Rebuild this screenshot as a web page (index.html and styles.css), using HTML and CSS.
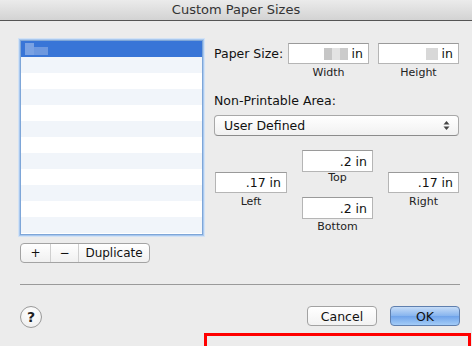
FILE: index.html
```html
<!DOCTYPE html>
<html>
<head>
<meta charset="utf-8">
<link rel="stylesheet" href="styles.css">
</head>
<body>
<div class="window">
  <div class="titlebar">Custom Paper Sizes</div>

  <div class="content">
    <div class="left">
      <div class="list">
        <div class="row selected"><span class="blur b1"></span><span class="blur b2"></span></div>
        <div class="row"></div><div class="row"></div><div class="row"></div>
        <div class="row"></div><div class="row"></div><div class="row"></div>
        <div class="row"></div><div class="row"></div><div class="row"></div>
        <div class="row"></div><div class="row"></div>
      </div>
      <div class="segmented">
        <span class="seg plus">+</span>
        <span class="seg minus">&minus;</span>
        <span class="seg dup">Duplicate</span>
      </div>
    </div>

    <div class="right">
      <div class="size-row">
        <span class="label">Paper Size:</span>
        <div class="field-group">
          <div class="field wide"><span class="blur g1"></span><span class="blur g2"></span><span class="blur g3"></span> in</div>
          <div class="caption">Width</div>
        </div>
        <div class="field-group">
          <div class="field wide"><span class="blur g4"></span> in</div>
          <div class="caption">Height</div>
        </div>
      </div>

      <div class="label np">Non-Printable Area:</div>
      <div class="popup">
        <span>User Defined</span>
        <svg class="arrows" width="7" height="11" viewBox="0 0 7 11">
          <path d="M3.5 1 L6.5 4.5 L0.5 4.5 Z" fill="#444"/>
          <path d="M3.5 10 L6.5 6.5 L0.5 6.5 Z" fill="#444"/>
        </svg>
      </div>

      <div class="margins">
        <div class="field m-top">.2 in</div>
        <div class="field m-left">.17 in</div>
        <div class="caption c-top">Top</div>
        <div class="field m-right">.17 in</div>
        <div class="caption c-left">Left</div>
        <div class="field m-bottom">.2 in</div>
        <div class="caption c-right">Right</div>
        <div class="caption c-bottom">Bottom</div>
      </div>
    </div>
  </div>

  <div class="separator"></div>

  <div class="footer">
    <div class="help">?</div>
    <div class="actions">
      <button class="btn">Cancel</button>
      <button class="btn default">OK</button>
    </div>
  </div>

  <div class="marker"></div>
</div>
</body>
</html>
```

FILE: styles.css
```css
* { margin: 0; padding: 0; box-sizing: border-box }

body {
  background: #ececec;
  font-family: "DejaVu Sans", "Liberation Sans", sans-serif;
  font-size: 12px;
  color: #111;
  overflow: hidden;
}

.window {
  position: relative;
  width: 472px;
  height: 346px;
}

.titlebar {
  height: 21px;
  line-height: 20px;
  text-align: center;
  font-size: 13px;
  color: #333;
  background: linear-gradient(#ebebeb, #d3d3d3);
  border-bottom: 1px solid #555;
}

.content {
  display: flex;
  padding: 19px 0 0 20px;
}

/* list + segmented buttons */
.left { width: 183px }

.list {
  height: 195px;
  border: 1px solid #7ea6d8;
  box-shadow: 0 0 0 1px #a9c8ee, 0 0 0 2px #d2e2f5;
  background: #fff;
}

.row { height: 16px; display: flex; align-items: center; padding-left: 4px }
.row:nth-child(even) { background: #f1f5fa }
.row.selected { background: #3875d7 }

.blur { display: inline-block }
.b1 { width: 9px; height: 12px; background: #7aa2e3 }
.b2 { width: 14px; height: 8px; background: #6d98df; margin-top: 4px }

.segmented {
  display: flex;
  width: 130px;
  height: 20px;
  margin-top: 8px;
  border: 1px solid #a3a3a3;
  border-radius: 4px;
  background: linear-gradient(#ffffff, #f0f0f0);
}

.seg {
  display: flex;
  align-items: center;
  justify-content: center;
  line-height: 18px;
  color: #111;
}
.plus { width: 30px; border-right: 1px solid #cfcfcf }
.minus { width: 28px; border-right: 1px solid #cfcfcf }
.dup { flex: 1 }

/* right column */
.right {
  margin-left: 11px;
  padding-top: 3px;
  width: 245px;
}

.label { font-size: 12.5px; line-height: 21px }

.size-row { display: flex }
.size-row .label { width: 74px }

.field-group { display: flex; flex-direction: column; align-items: center }
.field-group + .field-group { margin-left: 9px }

.field {
  height: 22px;
  background: #fff;
  border: 1px solid #b5b5b5;
  border-top-color: #9a9a9a;
  padding-right: 5px;
  font-size: 12.5px;
  display: flex;
  align-items: center;
  justify-content: flex-end;
}
.field.wide { width: 81px; height: 21px }

.g1 { width: 8px; height: 12px; background: #c6c6c6 }
.g2 { width: 8px; height: 12px; background: #e3e3e3 }
.g3 { width: 8px; height: 12px; background: #cbcbcb; margin-right: 4px }
.g4 { width: 12px; height: 12px; background: #d8d8d8; margin-right: 4px }

.caption {
  font-size: 11px;
  line-height: 14px;
  text-align: center;
  color: #222;
}
.field-group .caption { margin-top: 2px }

.np { margin-top: 14px; line-height: 14px }

.popup {
  display: flex;
  align-items: center;
  justify-content: space-between;
  height: 21px;
  margin-top: 7px;
  padding: 0 8px 0 9px;
  border: 1px solid #a8a8a8;
  border-bottom-color: #8c8c8c;
  border-radius: 4px;
  background: linear-gradient(#ffffff, #f1f1f1);
  font-size: 12.5px;
}

.margins {
  display: grid;
  grid-template-columns: 72px 71px 71px;
  grid-template-rows: 22px 24px 24px auto;
  column-gap: 15px;
  margin-top: 14px;
  margin-left: 1px;
}

.margins .caption { line-height: 12px }

.m-top { grid-column: 2; grid-row: 1 }
.m-left { grid-column: 1; grid-row: 2; height: 21px }
.c-top { grid-column: 2; grid-row: 2 }
.m-right { grid-column: 3; grid-row: 2; height: 21px }
.c-left { grid-column: 1; grid-row: 3 }
.m-bottom { grid-column: 2; grid-row: 3; margin-top: 1px }
.c-right { grid-column: 3; grid-row: 3 }
.c-bottom { grid-column: 2; grid-row: 4; padding-top: 1px }

.separator {
  height: 1px;
  background: #9a9a9a;
  margin: 21px 12px 0 20px;
}

.footer {
  display: flex;
  justify-content: space-between;
  padding: 21px 12px 0 20px;
}

.help {
  width: 22px;
  height: 22px;
  border-radius: 50%;
  border: 1px solid #9a9a9a;
  background: radial-gradient(circle at 50% 30%, #ffffff, #ececec);
  text-align: center;
  line-height: 20px;
  font-weight: bold;
  font-size: 14px;
  color: #222;
}

.actions { display: flex; gap: 13px }

.btn {
  width: 70px;
  height: 20px;
  border-radius: 4px;
  font-family: "DejaVu Sans", "Liberation Sans", sans-serif;
  font-size: 12.5px;
  color: #111;
  border: 1px solid #a2a2a2;
  background: linear-gradient(#ffffff, #f2f2f2);
}
.btn.default {
  border-color: #5f7fae;
  background: linear-gradient(#c6dcf7, #86b4ee 50%, #6fa3ea 51%, #a3ccf7);
}

.marker {
  position: absolute;
  left: 204px;
  top: 333px;
  width: 267px;
  height: 30px;
  border: 3px solid #ff0000;
}
```
